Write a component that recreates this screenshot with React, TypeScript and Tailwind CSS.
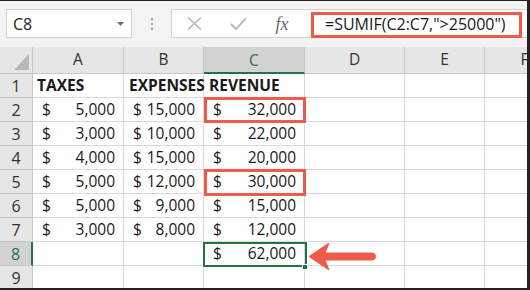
import React from 'react';

const rows = [
  { a: '5,000', b: '15,000', c: '32,000' },
  { a: '3,000', b: '10,000', c: '22,000' },
  { a: '4,000', b: '15,000', c: '20,000' },
  { a: '5,000', b: '12,000', c: '30,000' },
  { a: '5,000', b: '9,000', c: '15,000' },
  { a: '3,000', b: '8,000', c: '12,000' },
];

const cols = ['A', 'B', 'C', 'D', 'E', 'F'];

function Money({ value }: { value?: string }) {
  return (
    <div className="h-[24px] border-r border-b border-[#d9d9d9] flex items-center justify-between pl-[9px] pr-[8px]">
      {value && (
        <>
          <span>$</span>
          <span>{value}</span>
        </>
      )}
    </div>
  );
}

function Empty() {
  return <div className="h-[24px] border-r border-b border-[#d9d9d9]" />;
}

function RowHead({ n, active }: { n: number; active?: boolean }) {
  return (
    <div
      className={`h-[24px] border-b border-[#c8c8c8] flex items-center justify-center text-[16px] ${
        active
          ? 'bg-[#d2d2d2] text-[#217346] border-r-2 border-r-[#217346]'
          : 'bg-[#e6e6e6] text-[#333] border-r border-r-[#c8c8c8]'
      }`}
    >
      {n}
    </div>
  );
}

export default function App() {
  return (
    <div className="relative w-[530px] h-[290px] overflow-hidden bg-white border-t border-r-[3px] border-b-2 border-[#222] font-['Open_Sans',sans-serif] text-[15.5px] text-[#1a1a1a] leading-none">
      {/* formula bar */}
      <div className="h-[46px] bg-[#f3f3f3] flex items-start pt-[8px] pl-[6px]">
        <div className="w-[126px] h-[29px] bg-white border border-[#d4d4d4] flex items-center justify-between pl-[6px] pr-[7px] text-[16px] text-[#222]">
          <span>C8</span>
          <svg width="7" height="4" viewBox="0 0 7 4">
            <polygon points="0,0 7,0 3.5,4" fill="#707070" />
          </svg>
        </div>
        <div className="w-[39px] h-[29px] flex flex-col items-center justify-center gap-[3px]">
          <span className="w-[2px] h-[2px] bg-[#a0a0a0]" />
          <span className="w-[2px] h-[2px] bg-[#a0a0a0]" />
          <span className="w-[2px] h-[2px] bg-[#a0a0a0]" />
        </div>
        <div className="flex-1 h-[29px] bg-white border border-r-0 border-[#d4d4d4] flex items-center">
          <div className="w-[44px] flex justify-center">
            <svg width="15" height="13" viewBox="0 0 15 13">
              <path d="M1 0.5 L14 12.5 M14 0.5 L1 12.5" stroke="#b4b4b4" strokeWidth="1.4" fill="none" />
            </svg>
          </div>
          <div className="w-[44px] flex justify-center">
            <svg width="17" height="13" viewBox="0 0 17 13">
              <path d="M1 7 L6 12 L16 1" stroke="#b4b4b4" strokeWidth="1.8" fill="none" />
            </svg>
          </div>
          <div className="w-[44px] flex justify-center font-['Liberation_Serif',serif] italic text-[18px] text-[#666]">
            fx
          </div>
          <div className="pl-[21px] text-[16px] text-[#1a1a1a]">=SUMIF(C2:C7,"&gt;25000")</div>
        </div>
      </div>

      {/* grid */}
      <div className="grid grid-cols-[33px_91px_80px_101px_100px_80px_80px]">
        <div className="h-[27px] bg-[#e6e6e6] border-r border-b border-[#c8c8c8] flex items-end justify-end pr-[3px] pb-[3px]">
          <svg width="15" height="16" viewBox="0 0 15 16">
            <polygon points="0,16 15,16 15,0" fill="#b8b8b8" />
          </svg>
        </div>
        {cols.map((c) =>
          c === 'C' ? (
            <div
              key={c}
              className="h-[27px] bg-[#d2d2d2] border-r border-r-[#c8c8c8] border-b-2 border-b-[#217346] flex items-center justify-center text-[#217346] pt-[2px]"
            >
              {c}
            </div>
          ) : (
            <div
              key={c}
              className="h-[27px] bg-[#e6e6e6] border-r border-b border-[#c8c8c8] flex items-center justify-center text-[#333]"
            >
              {c}
            </div>
          )
        )}

        <RowHead n={1} />
        <div className="h-[24px] border-r border-b border-[#d9d9d9] flex items-center pl-[4px] font-bold">TAXES</div>
        <div className="h-[24px] border-r border-b border-[#d9d9d9] flex items-center pl-[5px] font-bold whitespace-nowrap">EXPENSES</div>
        <div className="h-[24px] border-r border-b border-[#d9d9d9] flex items-center pl-[5px] font-bold">REVENUE</div>
        <Empty />
        <Empty />
        <Empty />

        {rows.map((r, i) => (
          <React.Fragment key={i}>
            <RowHead n={i + 2} />
            <Money value={r.a} />
            <Money value={r.b} />
            <Money value={r.c} />
            <Empty />
            <Empty />
            <Empty />
          </React.Fragment>
        ))}

        <RowHead n={8} active />
        <Empty />
        <Empty />
        <Money value="62,000" />
        <Empty />
        <Empty />
        <Empty />

        <RowHead n={9} />
        <Empty />
        <Empty />
        <Empty />
        <Empty />
        <Empty />
        <Empty />
      </div>

      {/* selection */}
      <div className="absolute left-[203px] top-[241px] w-[104px] h-[25px] border-2 border-[#217346]" />
      <div className="absolute left-[302px] top-[263px] w-[6px] h-[6px] bg-[#217346] border border-white" />

      {/* annotations */}
      <div className="absolute left-[311px] top-[11px] w-[211px] h-[26px] border-[3px] border-[#ef5a4b]" />
      <div className="absolute left-[204px] top-[96px] w-[102px] h-[26px] border-[3px] border-[#ef5a4b]" />
      <div className="absolute left-[204px] top-[168px] w-[102px] h-[27px] border-[3px] border-[#ef5a4b]" />
      <svg className="absolute left-[308px] top-[240px]" width="70" height="30" viewBox="0 0 70 30">
        <path
          d="M1 15.5 L21 2 L17 12 L64 12 A3.5 3.5 0 0 1 64 19 L17 19 L21 29 Z"
          fill="#ef5a4b"
          stroke="#ef5a4b"
          strokeWidth="1"
          strokeLinejoin="round"
        />
      </svg>
    </div>
  );
}
